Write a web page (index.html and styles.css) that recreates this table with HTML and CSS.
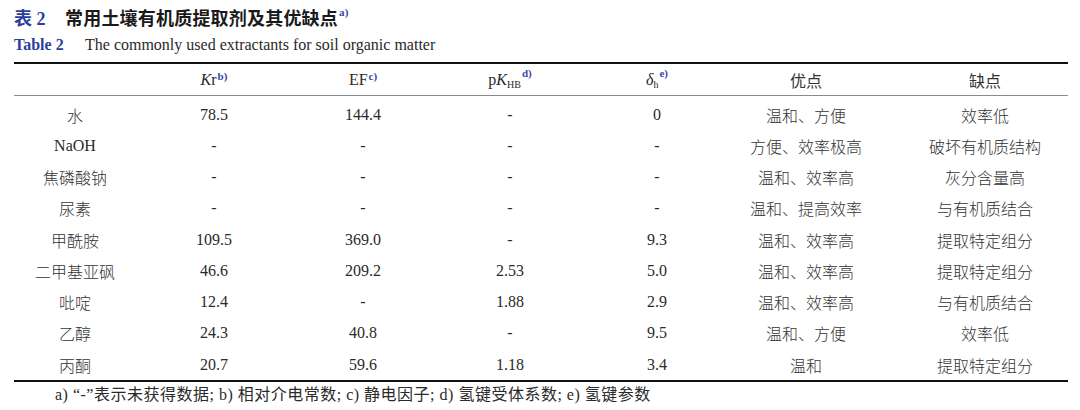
FILE: index.html
```html
<!DOCTYPE html>
<html lang="zh">
<head>
<meta charset="utf-8">
<title>表 2</title>
<link rel="stylesheet" href="styles.css">
</head>
<body>
<div class="page">
  <div class="title-cn"><span class="tag">表 2</span><span class="title-text">常用土壤有机质提取剂及其优缺点<sup class="note">a)</sup></span></div>
  <div class="title-en"><span class="tag-en">Table 2</span><span class="title-text-en">The commonly used extractants for soil organic matter</span></div>
  <table class="data">
    <colgroup>
      <col class="c0"><col class="c1"><col class="c2"><col class="c3"><col class="c4"><col class="c5"><col class="c6">
    </colgroup>
    <thead>
      <tr>
        <th></th>
        <th><i>K</i>r<sup class="note">b)</sup></th>
        <th>EF<sup class="note">c)</sup></th>
        <th>p<i>K</i><sub class="sub">HB</sub><sup class="note hi">d)</sup></th>
        <th><i>δ</i><sub class="sub">h</sub><sup class="note hi">e)</sup></th>
        <th class="cn">优点</th>
        <th class="cn last">缺点</th>
      </tr>
    </thead>
    <tbody>
      <tr><td class="cn">水</td><td>78.5</td><td>144.4</td><td>-</td><td>0</td><td class="cn">温和、方便</td><td class="cn last">效率低</td></tr>
      <tr><td>NaOH</td><td>-</td><td>-</td><td>-</td><td>-</td><td class="cn">方便、效率极高</td><td class="cn last">破坏有机质结构</td></tr>
      <tr><td class="cn">焦磷酸钠</td><td>-</td><td>-</td><td>-</td><td>-</td><td class="cn">温和、效率高</td><td class="cn last">灰分含量高</td></tr>
      <tr><td class="cn">尿素</td><td>-</td><td>-</td><td>-</td><td>-</td><td class="cn">温和、提高效率</td><td class="cn last">与有机质结合</td></tr>
      <tr><td class="cn">甲酰胺</td><td>109.5</td><td>369.0</td><td>-</td><td>9.3</td><td class="cn">温和、效率高</td><td class="cn last">提取特定组分</td></tr>
      <tr><td class="cn">二甲基亚砜</td><td>46.6</td><td>209.2</td><td>2.53</td><td>5.0</td><td class="cn">温和、效率高</td><td class="cn last">提取特定组分</td></tr>
      <tr><td class="cn">吡啶</td><td>12.4</td><td>-</td><td>1.88</td><td>2.9</td><td class="cn">温和、效率高</td><td class="cn last">与有机质结合</td></tr>
      <tr><td class="cn">乙醇</td><td>24.3</td><td>40.8</td><td>-</td><td>9.5</td><td class="cn">温和、方便</td><td class="cn last">效率低</td></tr>
      <tr><td class="cn">丙酮</td><td>20.7</td><td>59.6</td><td>1.18</td><td>3.4</td><td class="cn">温和</td><td class="cn last">提取特定组分</td></tr>
    </tbody>
  </table>
  <div class="foot">a) “-”表示未获得数据; b) 相对介电常数; c) 静电因子; d) 氢键受体系数; e) 氢键参数</div>
</div>
</body>
</html>
```

FILE: styles.css
```css
html, body {
  margin: 0;
  padding: 0;
  background: #ffffff;
}

.page {
  padding: 6px 12px 0 14px;
  font-family: "Liberation Serif", "Noto Sans CJK SC", serif;
  color: #2a2a2a;
}

.title-cn {
  display: flex;
  align-items: baseline;
  height: 26px;
  line-height: 26px;
  font-size: 18px;
  font-weight: bold;
  color: #1a1a1a;
}

.tag {
  color: #2d3e9b;
  font-weight: bold;
  font-size: 18px;
  width: 51px;
}

.title-text {
  font-family: "Liberation Serif", "Noto Sans CJK SC", serif;
  font-weight: bold;
  letter-spacing: 0.2px;
}

.note {
  color: #3b46a8;
  font-size: 11px;
  font-weight: bold;
  vertical-align: top;
  line-height: 10px;
  position: relative;
  top: 1px;
  margin-left: 1px;
}

.title-en {
  display: flex;
  align-items: baseline;
  height: 26px;
  line-height: 26px;
  font-size: 16px;
}

.tag-en {
  color: #2d3e9b;
  font-weight: bold;
  width: 71px;
}

.title-text-en {
  color: #2a2a2a;
}

.data {
  margin-top: 4px;
  width: 1054px;
  table-layout: fixed;
  border-collapse: collapse;
  border-top: 2px solid #111;
  border-bottom: 2px solid #111;
  font-size: 16px;
}

.c0 { width: 122px; }
.c1 { width: 156px; }
.c2 { width: 142px; }
.c3 { width: 152px; }
.c4 { width: 142px; }
.c5 { width: 156px; }
.c6 { width: 184px; }

.data th {
  font-weight: normal;
  height: 31px;
  padding: 0;
  text-align: center;
  vertical-align: middle;
  border-bottom: 1px solid #8a8a8a;
  line-height: 20px;
}

.data td {
  height: 31.25px;
  padding: 0;
  text-align: center;
  vertical-align: middle;
  line-height: 20px;
}

.data tbody tr:first-child td {
  padding-top: 3px;
}

.cn {
  font-family: "Noto Sans CJK SC", sans-serif;
  font-weight: 300;
  color: #333;
}

.last {
  padding-left: 18px !important;
}

.sub {
  font-size: 10px;
  line-height: 10px;
  vertical-align: -3px;
}

.hi {
  position: relative;
  top: -2px;
}

.foot {
  padding: 2px 0 0 41px;
  font-size: 16px;
  line-height: 22px;
  letter-spacing: 0.5px;
  color: #2a2a2a;
}
```
